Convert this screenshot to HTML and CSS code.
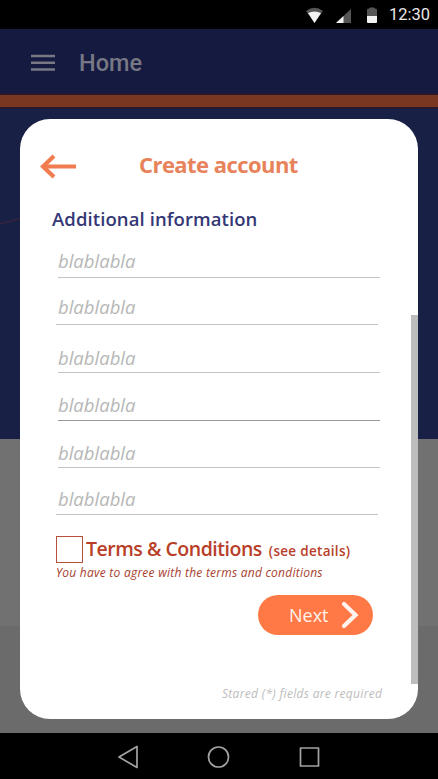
FILE: index.html
```html
<!DOCTYPE html>
<html lang="en">
<head>
<meta charset="utf-8">
<title>Create account</title>
<link rel="stylesheet" href="styles.css">
</head>
<body>
<div class="screen">
  <div class="status">
    <svg class="status-icons" width="76" height="20" viewBox="0 0 76 20">
      <path d="M0 4Q8.500-2.500 17 4L8.500 16Z" fill="#555"/>
      <path d="M2 6Q8.500 3 15 6L8.500 16Z" fill="#f2f2f2"/>
      <path d="M45 2V16H30Z" fill="#555"/>
      <path d="M37.500 9V16H30Z" fill="#f2f2f2"/>
      <path d="M61 3Q61 1.500 63 1.500L64 .5H68L69 1.500Q71 1.500 71 3V9H61Z" fill="#555"/>
      <path d="M61 9H71V15Q71 16 70 16H62Q61 16 61 15Z" fill="#f2f2f2"/>
    </svg>
    <span class="clock">12:30</span>
  </div>
  <header class="appbar">
    <svg width="24" height="18" viewBox="0 0 24 18"><path d="M0 2H24M0 8.700H24M0 15.500H24" stroke="#777884" stroke-width="2.500"/></svg>
    <span class="page-name">Home</span>
  </header>
  <div class="stripe"></div>
  <div class="hero"><svg width="22" height="8" viewBox="0 0 22 8"><path d="M0 7L22 1" stroke="#38233e" stroke-width="1.300"/></svg></div>
  <div class="panel"></div>
  <div class="panel-low"></div>
  <nav class="navbar">
    <svg width="202" height="24" viewBox="0 0 202 24" fill="none" stroke="#a3a3a3" stroke-width="1.700" stroke-linejoin="round">
      <path d="M19 1.500V22.500L1 12Z"/>
      <circle cx="100.500" cy="12" r="10"/>
      <rect x="182.500" y="3" width="18" height="18"/>
    </svg>
  </nav>

  <main class="dialog">
    <div class="dialog-head">
      <svg width="38" height="26" viewBox="0 0 38 26" fill="none" stroke="#f17c4f" stroke-width="4.200"><path d="M36 12.500H4M14 2L3 12.500L14 23"/></svg>
      <h1 class="title">Create account</h1>
    </div>
    <h2 class="subtitle">Additional information</h2>
    <div class="field f1"><span>blablabla</span></div>
    <div class="field f2 shifted"><span>blablabla</span></div>
    <div class="field f3"><span>blablabla</span></div>
    <div class="field f4"><span>blablabla</span></div>
    <div class="field f5"><span>blablabla</span></div>
    <div class="field f6 shifted"><span>blablabla</span></div>
    <div class="terms">
      <span class="box"></span>
      <span class="terms-name">Terms &amp; Conditions</span>
      <span class="details">(see details)</span>
    </div>
    <div class="hint"><span>You have to agree with the terms and conditions</span></div>
    <button class="next"><span>Next</span>
      <svg width="18" height="28" viewBox="0 0 18 28"><path d="M3 3L14.500 14L3 25" fill="none" stroke="#fff5ee" stroke-width="4.200" stroke-linecap="round"/></svg>
    </button>
    <div class="note"><span>Stared (*) fields are required</span></div>
    <div class="scrollbar"></div>
  </main>
</div>
</body>
</html>
```

FILE: styles.css
```css
* { box-sizing: border-box; }
body { margin: 0; }
.screen {
  position: relative;
  width: 438px;
  height: 779px;
  display: flex;
  flex-direction: column;
  overflow: hidden;
  background: #000;
  font-family: "Open Sans", "Noto Sans", sans-serif;
  white-space: nowrap;
}
.status {
  height: 29px;
  display: flex;
  justify-content: flex-end;
  align-items: center;
  gap: 7px;
  padding-right: 10px;
}
.status-icons { margin-top: 5px; }
.clock { font: 16.500px/20px Roboto, sans-serif; color: #e8e8e8; width: 39px; }
.appbar {
  height: 64px;
  display: flex;
  align-items: center;
  gap: 24px;
  padding: 3px 0 0 31px;
  background: #151a41;
}
.page-name { font: 500 23.500px/30px Roboto, sans-serif; color: #777884; }
.stripe { height: 16px; background: #793620; border: solid #29192d; border-width: 2px 0; }
.hero { height: 330px; padding-top: 108px; background: #182045; }
.hero svg { display: block; }
.panel { height: 187px; background: #717171; }
.panel-low { height: 107px; background: #6b6b6b; }
.navbar { height: 46px; display: flex; align-items: center; padding: 2px 0 0 118px; }
.dialog {
  position: absolute;
  left: 20px;
  top: 119px;
  width: 398px;
  height: 600px;
  border-radius: 30px;
  background: #fff;
}
.dialog-head { height: 81px; display: flex; padding: 30px 0 0 20px; }
.dialog-head svg { margin-top: 5px; }
.title { margin: 0 0 0 61px; font-size: 22px; font-weight: 700; line-height: 30px; letter-spacing: -.55px; color: #e8825a; }
.subtitle { margin: 5px 0 0 32px; font-size: 18.500px; font-weight: 600; line-height: 28px; letter-spacing: .09px; color: #343775; }
.field {
  width: 322px;
  margin-left: 38px;
  display: flex;
  align-items: flex-end;
  border-bottom: 1.500px solid #c4c4c4;
  font-size: 18.500px;
  font-style: italic;
  line-height: 20px;
  color: #b7b7b7;
}
.shifted { margin-left: 36px; padding-left: 2px; }
.f1 { height: 45px; padding-bottom: 6px; }
.f2 { height: 47px; padding-bottom: 7px; }
.f3 { height: 48px; padding-bottom: 4px; }
.f4 { height: 48px; padding-bottom: 5px; border-color: #999; }
.f5 { height: 47px; padding-bottom: 4px; }
.f6 { height: 47px; padding-bottom: 5px; }
.terms { display: flex; align-items: baseline; height: 27px; margin: 21px 0 0 36px; color: #b83e28; font-weight: 600; line-height: 26px; }
.box { width: 27px; height: 27px; border: 1.300px solid #b5503c; align-self: flex-start; margin-right: 3px; }
.terms-name { font-size: 19.500px; letter-spacing: -.48px; }
.details { margin-left: 7px; font-size: 13.500px; letter-spacing: .35px; }
.terms .details { letter-spacing: .3px; }
.hint { height: 32px; padding: 2px 0 0 36px; font-size: 12px; font-style: italic; line-height: 16px; letter-spacing: .24px; color: #a8402f; }
.next {
  display: flex;
  align-items: center;
  width: 115px;
  height: 40px;
  margin-left: 238px;
  padding: 0 14px 0 31px;
  border: 0;
  border-radius: 20px;
  justify-content: space-between;
  background: #ff7946;
  color: #fff3ec;
  font: 18px/26px "Open Sans", sans-serif;
}
.note { padding: 51px 0 0 202px; font-size: 12px; font-style: italic; line-height: 16px; letter-spacing: .31px; color: #bcbcbc; }
.scrollbar { position: absolute; right: 0; top: 196px; width: 7px; height: 369px; background: #bdbdbd; }
```
